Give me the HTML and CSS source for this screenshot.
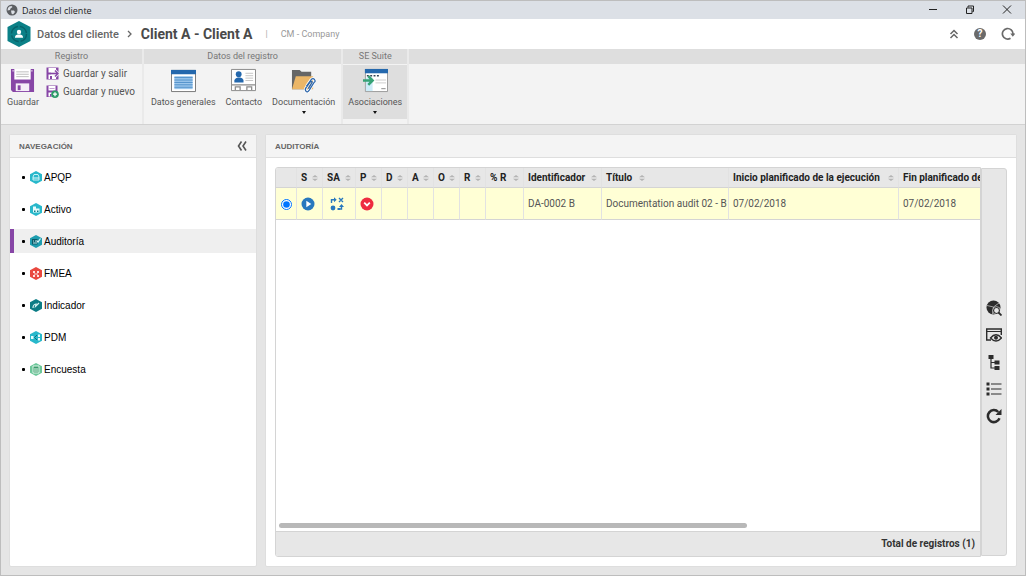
FILE: index.html
```html
<!DOCTYPE html>
<html lang="es">
<head>
<meta charset="utf-8">
<title>Datos del cliente</title>
<link rel="stylesheet" href="styles.css">
</head>
<body>
<svg class="defs" aria-hidden="true">
  <symbol id="hex" viewBox="0 0 12 13"><path d="M6 0 12 3.2V9.8L6 13 0 9.800V3.200Z"/></symbol>
  <symbol id="sort" viewBox="0 0 6 6"><path d="M0 2.300 3 0 6 2.300ZM0 3.700 3 6 6 3.700Z" fill="#b4b4b4"/></symbol>
</svg>
<div class="window">
  <div class="titlebar">
    <svg class="globe" viewBox="0 0 12 12"><circle cx="6" cy="6" r="5.500" fill="#5c5f63"/><path d="M2 4Q3 2 5.500 2L6.500 3 4.500 4.500 4 6 1.500 6.500ZM5 6.500 8 6.500 9 8 7 10.500 5.500 9.500Z" fill="#dce0e6"/></svg>
    <span class="titlebar-text">Datos del cliente</span>
    <button class="win-btn" aria-label="Minimizar"><svg viewBox="0 0 10 10"><path d="M1 4.500H9" /></svg></button>
    <button class="win-btn" aria-label="Restaurar"><svg viewBox="0 0 10 10"><path d="M1.500 3H7V8.500H1.500ZM3 2.500V1H8.500V6.500H7.500"/></svg></button>
    <button class="win-btn" aria-label="Cerrar"><svg viewBox="0 0 10 10"><path d="M1 .5 9 8.500M9 .5 1 8.500"/></svg></button>
  </div>

  <header class="header">
    <svg class="logo" viewBox="0 0 24 26"><path d="M12 0 23.500 6V20L12 26 .5 20V6Z" fill="#0b8087"/><circle cx="12" cy="13" r="7.500" fill="none" stroke="#07626a" stroke-width="1.500" stroke-dasharray="10 2"/><circle cx="12" cy="11" r="2.200" fill="#fff"/><path d="M8 16.800V15.500Q8.500 13.800 10.500 13.500H13.500Q15.500 13.800 16 15.500V16.800Z" fill="#fff"/></svg>
    <a class="crumb" href="#">Datos del cliente</a>
    <svg class="chevron" viewBox="0 0 5 8"><path d="M1 1 4 4 1 7"/></svg>
    <h1 class="title">Client A - Client A</h1>
    <span class="divider">|</span>
    <span class="company">CM - Company</span>
    <div class="header-actions">
      <button aria-label="Contraer"><svg class="ic10" viewBox="0 0 10 10"><path d="M1.500 5 5 1.500 8.500 5M1.500 9 5 5.500 8.500 9" fill="none" stroke="#666" stroke-width="1.500"/></svg></button>
      <button aria-label="Ayuda" class="help"><span>?</span></button>
      <button aria-label="Recargar"><svg class="ic14" viewBox="0 0 14 14"><path d="M9.500 11.300A5.300 5.300 0 1 1 12 7" fill="none" stroke="#6a6a6a" stroke-width="1.700"/><path d="M9.300 6.500H14.300L11.800 9.700Z" fill="#6a6a6a"/></svg></button>
    </div>
  </header>

  <div class="ribbon">
    <section class="group">
      <h2 class="group-title">Registro</h2>
      <div class="group-body registro">
        <button class="tool">
          <svg class="tool-icon" viewBox="0 0 26 26"><path d="M1 1H25V25H3L1 23Z" fill="#8746a6"/><path d="M4.500 1H21.500V12H4.500Z" fill="#fff"/><path d="M6.500 4H19.500M6.500 6.500H19.500M6.500 9H19.500" stroke="#bbb"/><path d="M6 16H20V24H6Z" fill="#f5eff8"/><path d="M8 18H11V23H8Z" fill="#8746a6"/><path d="M22 3H23.500M2.500 3H4" stroke="#fff"/></svg>
          Guardar
        </button>
        <div class="stack">
          <button class="small-tool"><svg viewBox="0 0 13 13"><path d="M.5.5H12.500V12.500H.5Z" fill="#8746a6"/><path d="M2.500 1H10V5.500H2.500ZM2.500 7.500H10V12H2.500Z" fill="#fff"/><path d="M4 9H6V12H4Z" fill="#8746a6"/><path d="M5 6.500H12M9 3.500 12 6.500 9 9.500" fill="none" stroke="#f3f3f3" stroke-width="3"/><path d="M5 6.500H12M9 3.500 12 6.500 9 9.500" fill="none" stroke="#8746a6" stroke-width="1.400"/></svg>Guardar y salir</button>
          <button class="small-tool"><svg viewBox="0 0 13 13"><path d="M.5.5H11.500V12H.5Z" fill="#8746a6"/><path d="M2.500 1H9.500V5.500H2.500ZM2.500 7.500H9V11.500H2.500Z" fill="#fff"/><path d="M4 9H5.500V11.500H4ZM3.500 3H8.500V3.600H3.500Z" fill="#8746a6"/><circle cx="9" cy="9.200" r="3.800" fill="#2c9a69"/><path d="M7 9.200H11M9 7.200V11.200" stroke="#fff" stroke-width="1.300"/></svg>Guardar y nuevo</button>
        </div>
      </div>
    </section>
    <section class="group">
      <h2 class="group-title">Datos del registro</h2>
      <div class="group-body registro-data">
        <button class="tool">
          <svg class="tool-icon" viewBox="0 0 26 26"><path d="M.5 2.500H25.500V24.500H.5Z" fill="#fff" stroke="#777"/><path d="M0 2H26V6.500H0Z" fill="#2468ad"/><path d="M3.500 8.500H22.500V22H3.500Z" fill="#9dc7ec"/><path d="M3.500 10H22.500M3.500 12.500H22.500M3.500 15H22.500M3.500 17.500H22.500M3.500 20H22.500" stroke="#4e8fc9"/></svg>
          Datos generales
        </button>
        <button class="tool">
          <svg class="tool-icon" viewBox="0 0 26 26"><path d="M.5 1.500H25.500V23.500H.5Z" fill="#fff" stroke="#888"/><circle cx="8" cy="6.500" r="3" fill="#2468ad"/><path d="M3.500 15V12.500Q5 10.500 7 10H9.500Q12 10.500 13 12.500V15Z" fill="#2468ad"/><path d="M15 5.500H23M15 8H23M15 10.500H23M15 13H23" stroke="#c4c4c4"/><path d="M1 17.500H25M4.500 23V19.500H9.500V23M16.500 23V19.500H21.500V23" fill="none" stroke="#8a8a8a" stroke-width="1.300"/></svg>
          Contacto
        </button>
        <button class="tool">
          <svg class="tool-icon" viewBox="0 0 26 26"><path d="M1 2H9L11 4H21V22H1Z" fill="#666"/><path d="M5 8.500H23V22H1Z" fill="#ebb667"/><path d="M16 19 21 12Q23 10 24.500 12T24 15L19 23Q17 26 15.500 24T16 20L20 14" fill="none" stroke="#fff" stroke-width="3"/><path d="M16 19 21 12Q23 10 24.500 12T24 15L19 23Q17 26 15.500 24T16 20L20 14.500Q22 13 22 15L18 21.500" fill="none" stroke="#2c65aa" stroke-width="1.300"/></svg>
          Documentación
          <span class="caret"></span>
        </button>
      </div>
    </section>
    <section class="group suite">
      <h2 class="group-title">SE Suite</h2>
      <div class="group-body">
        <button class="tool active">
          <svg class="tool-icon" viewBox="0 0 26 26"><path d="M2.500 1.500H25.500V24.500H2.500Z" fill="#fff" stroke="#999"/><path d="M2 1H26V5.500H2Z" fill="#2468ad"/><path d="M4 8H18" stroke="#345" stroke-width="1.500" stroke-dasharray="2 1.500"/><path d="M3 10H10V24H3Z" fill="#ccecf8"/><path d="M13 12.500H24M13 15.500H24" stroke="#ccc"/><path d="M19 21.500H23.500" stroke="#888"/><path d="M0 13H9M5.500 8.500 10 13 5.500 17.500" fill="none" stroke="#35a275" stroke-width="2.600"/></svg>
          Asociaciones
          <span class="caret"></span>
        </button>
      </div>
    </section>
    <div class="group filler"><div class="group-title"></div><div class="group-body"></div></div>
  </div>

  <main class="content">
    <aside class="panel nav-panel">
      <div class="panel-head"><h2>NAVEGACIÓN</h2><button aria-label="Contraer navegación"><svg class="ic10" viewBox="0 0 10 10"><path d="M4.500.5 1.500 5 4.500 9.500M9 .5 6 5 9 9.500" fill="none" stroke="#555" stroke-width="1.600"/></svg></button></div>
      <nav><ul class="nav-list">
        <li><a href="#"><svg viewBox="0 0 12 13"><use href="#hex" fill="#28b8cb"/><path d="M3 6 4 3.500H8L9 6V9H3Z" fill="none" stroke="#c9f2f6"/><path d="M3 7H9" stroke="#e8fbfc"/></svg>APQP</a></li>
        <li><a href="#"><svg viewBox="0 0 12 13"><use href="#hex" fill="#28b8cb"/><path d="M3 3.500H6V5.500H9.500V9.500H3Z" fill="#e8fbfc"/><path d="M4 7.500H5.500V9H4ZM7 7.500H8.500V9H7Z" fill="#0b7c88"/></svg>Activo</a></li>
        <li class="selected"><a href="#"><svg viewBox="0 0 12 13"><use href="#hex" fill="#1d9daf"/><path d="M2 4H7.500V9.500H2Z" fill="#0a5967"/><path d="M3 6H4M5 6H6M3 8H7" stroke="#bdebf0"/><path d="M6.500 5.500 8 7 10.500 3.500" fill="none" stroke="#dff8fa" stroke-width="1.200"/></svg>Auditoría</a></li>
        <li><a href="#"><svg viewBox="0 0 12 13"><use href="#hex" fill="#e9483f"/><path d="M3 4H5V6H3ZM7 4H9V6H7ZM3 8H5V10H3ZM7 8H9V10H7ZM4 6.500H8V7.500H4Z" fill="#fde0de"/></svg>FMEA</a></li>
        <li><a href="#"><svg viewBox="0 0 12 13"><use href="#hex" fill="#0b7c85"/><path d="M3 9Q3 5.500 6 5L5.500 7.500 9 4" fill="none" stroke="#d5f1f2" stroke-width="1.200"/></svg>Indicador</a></li>
        <li><a href="#"><svg viewBox="0 0 12 13"><use href="#hex" fill="#28b8cb"/><path d="M1 5H3.500V8H1ZM8 3.500H10V6H8ZM8 7H10V9.500H8Z" fill="#e8fbfc"/><path d="M7 4 4.500 6.500 7 9" fill="none" stroke="#0b6d7c"/></svg>PDM</a></li>
        <li><a href="#"><svg viewBox="0 0 12 13"><use href="#hex" fill="#6cc79a"/><path d="M3 3H9V10H3Z" fill="#3c9c6d" stroke="#e0f6ea"/><path d="M4 6H8M4 8H8" stroke="#e0f6ea"/></svg>Encuesta</a></li>
      </ul></nav>
    </aside>

    <section class="panel main-panel">
      <div class="panel-head"><h2>AUDITORÍA</h2></div>
      <div class="grid-wrap">
        <div class="grid">
          <div class="grid-scroll">
            <table>
              <colgroup><col class="c-radio"><col class="c-s"><col class="c-sa"><col class="c-s"><col class="c-s"><col class="c-s"><col class="c-s"><col class="c-s"><col class="c-pr"><col class="c-id"><col class="c-title"><col class="c-date"><col class="c-date"></colgroup>
              <thead><tr>
                <th></th>
                <th>S<svg class="sort"><use href="#sort"/></svg></th>
                <th>SA<svg class="sort"><use href="#sort"/></svg></th>
                <th>P<svg class="sort"><use href="#sort"/></svg></th>
                <th>D<svg class="sort"><use href="#sort"/></svg></th>
                <th>A<svg class="sort"><use href="#sort"/></svg></th>
                <th>O<svg class="sort"><use href="#sort"/></svg></th>
                <th>R<svg class="sort"><use href="#sort"/></svg></th>
                <th>% R<svg class="sort"><use href="#sort"/></svg></th>
                <th>Identificador<svg class="sort"><use href="#sort"/></svg></th>
                <th class="left">Título<svg class="sort"><use href="#sort"/></svg></th>
                <th>Inicio planificado de la ejecución<svg class="sort"><use href="#sort"/></svg></th>
                <th class="left">Fin planificado de la ejecución<svg class="sort"><use href="#sort"/></svg></th>
              </tr></thead>
              <tbody><tr>
                <td class="radio"><input type="radio" name="row" checked aria-label="Seleccionar DA-0002 B"></td>
                <td><svg class="ic14" viewBox="0 0 14 14"><circle cx="7" cy="7" r="6.500" fill="#2878be"/><path d="M5.300 3.800 10.300 7 5.300 10.200Z" fill="#fff"/></svg></td>
                <td class="status"><svg class="ic14" viewBox="0 0 14 14"><path d="M1.500 6V2.800H5M9 1 13 5M13 1 9 5M8.500 12H11.500V9.500" fill="none" stroke="#2878be" stroke-width="1.400"/><path d="M4 .3 6.700 2.800 4 5.300ZM9 10 11.500 7 14 10ZM7.500 11H10V13H7.500Z" fill="#2878be"/><circle cx="3" cy="11" r="2.400" fill="#2878be"/></svg></td>
                <td><svg class="ic14" viewBox="0 0 14 14"><circle cx="7" cy="7" r="6.500" fill="#ee2c40"/><path d="M4.200 5.700 7 8.400 9.800 5.700" fill="none" stroke="#fff" stroke-width="1.800"/></svg></td>
                <td></td><td></td><td></td><td></td><td></td>
                <td>DA-0002 B</td>
                <td>Documentation audit 02 - B</td>
                <td>07/02/2018</td>
                <td>07/02/2018</td>
              </tr></tbody>
            </table>
            <div class="scrollbar"><div class="thumb"></div></div>
          </div>
          <div class="grid-foot">Total de registros (1)</div>
        </div>
        <div class="side-tools">
          <button aria-label="Análisis"><svg viewBox="0 0 16 16"><circle cx="7.500" cy="7.500" r="7" fill="#2c2c2c"/><path d="M1 5.500 7.500 7 13 3M7.500 7 6.500 14" fill="none" stroke="#bbb" stroke-width=".8"/><circle cx="10.500" cy="10.500" r="3" fill="#e6e6e6" stroke="#2c2c2c" stroke-width="1.200"/><circle cx="10.500" cy="10.500" r="3.900" fill="none" stroke="#e6e6e6" stroke-width=".6"/><path d="M12.500 12.500 15.500 15.500" stroke="#2c2c2c" stroke-width="1.800"/></svg></button>
          <button aria-label="Vista previa"><svg viewBox="0 0 16 16"><path d="M5 13H.7V2H15.300V8" fill="none" stroke="#2c2c2c" stroke-width="1.400"/><path d="M1 4.500H15" stroke="#2c2c2c"/><path d="M4.500 11Q10 4.500 15.500 11Q10 17 4.500 11Z" fill="#e6e6e6" stroke="#2c2c2c" stroke-width="1.300"/><circle cx="10" cy="10.800" r="2" fill="#2c2c2c"/></svg></button>
          <button aria-label="Estructura"><svg viewBox="0 0 16 16"><path d="M2.500 1H7.500V5H2.500ZM8.500 6.500H13.500V10.500H8.500ZM8.500 12H13.500V16H8.500Z" fill="#2c2c2c"/><path d="M5 4V14H9M5 8.500H9" fill="none" stroke="#2c2c2c" stroke-width="1.200"/></svg></button>
          <button aria-label="Lista"><svg viewBox="0 0 16 16"><path d="M.5 1.500H3.500V4.500H.5ZM.5 6.500H3.500V9.500H.5ZM.5 11.500H3.500V14.500H.5Z" fill="#2c2c2c"/><path d="M5 3H15.500M5 8H15.500M5 13H15.500" stroke="#2c2c2c" stroke-width="1.200"/></svg></button>
          <button aria-label="Actualizar"><svg viewBox="0 0 16 16"><path d="M12.300 4A6 6 0 1 0 13.500 10.300" fill="none" stroke="#2c2c2c" stroke-width="2.500"/><path d="M15.500 1V7H9.500Z" fill="#2c2c2c"/></svg></button>
        </div>
      </div>
    </section>
  </main>
</div>
</body>
</html>
```

FILE: styles.css
```css
* { box-sizing: border-box; }
body { margin: 0; font-family: Roboto, "Liberation Sans", Arial, sans-serif; font-size: 10px; color: #555; }
h1, h2, ul { margin: 0; padding: 0; }
button { border: 0; padding: 0; margin: 0; background: none; font: inherit; color: inherit; }
a { color: inherit; text-decoration: none; }
svg { display: block; flex: none; }
.defs { display: none; }
.ic10 { width: 10px; height: 10px; }
.ic14 { width: 14px; height: 14px; }

.window { height: 100vh; display: flex; flex-direction: column; border: 1px solid #bdbdbd; background: #e5e5e5; overflow: hidden; }

.titlebar { flex: none; display: flex; align-items: center; height: 18px; padding-left: 5px; background: #dce0e6; color: #222; font-family: "Open Sans", "Noto Sans", sans-serif; font-size: 9px; }
.globe { width: 12px; height: 12px; margin-right: 4px; }
.titlebar-text { flex: 1; }
.win-btn { width: 37px; height: 18px; display: flex; align-items: center; justify-content: center; }
.win-btn svg { width: 10px; height: 10px; fill: none; stroke: #222; }

.header { flex: none; display: flex; align-items: center; height: 30px; padding: 0 10px 0 6px; background: #fff; }
.logo { width: 24px; height: 26px; margin-right: 6px; }
.crumb { font-size: 11px; font-weight: 500; color: #666; }
.chevron { width: 5px; height: 8px; margin: 0 9px 0 8px; fill: none; stroke: #666; stroke-width: 1.3; }
.title { font-size: 14px; line-height: 16px; font-weight: bold; color: #4a4a4a; }
.divider { margin: 0 13px; color: #aaa; font-size: 9px; }
.company { color: #999; font-size: 9px; }
.header-actions { margin-left: auto; display: flex; align-items: center; gap: 15px; }
.help { width: 12px; height: 12px; border-radius: 50%; background: #6a6a6a; color: #fff; font-size: 10px; line-height: 12px; font-weight: bold; }

.ribbon { flex: none; display: flex; gap: 2px; height: 76px; border-bottom: 1px solid #d2d2d2; background: #eaeaea; }
.group { display: flex; flex-direction: column; }
.group.filler { flex: 1; }
.group-title { height: 15px; line-height: 15px; background: #dedede; color: #777; font-size: 9px; font-weight: normal; text-align: center; }
.group-body { flex: 1; display: flex; background: #f3f3f3; }
.group-body.registro { padding: 0 7px 0 6px; gap: 7px; }
.group-body.registro-data { padding: 0 6px 0 7px; gap: 10px; }
.suite .group-body { padding: 1px 0 0; }
.tool { display: flex; flex-direction: column; align-items: center; height: 54px; padding-top: 4px; font-size: 9px; line-height: 12px; gap: 3px; white-space: nowrap; }
.tool.active { padding: 3px 5px 0; background: #dedede; }
.tool-icon { width: 25px; height: 25px; }
.caret { border: 2px solid transparent; border-top: 3px solid #111; border-bottom: 0; }
.stack { display: flex; flex-direction: column; gap: 4px; padding-top: 2px; }
.small-tool { display: flex; align-items: center; gap: 4px; height: 14px; font-size: 10px; white-space: nowrap; }
.small-tool svg { width: 13px; height: 13px; }

.content { flex: 1; min-height: 0; display: flex; gap: 8px; padding: 9px 8px 8px; }
.panel { display: flex; flex-direction: column; background: #fff; border: 1px solid #dedede; border-radius: 2px; }
.nav-panel { flex: none; width: 248px; font-family: "Liberation Sans", Arial, sans-serif; }
.main-panel { flex: 1; min-width: 0; }
.panel-head { flex: none; display: flex; align-items: center; justify-content: space-between; height: 23px; padding: 0 9px; background: #f4f4f4; border-bottom: 1px solid #dedede; }
.panel-head h2 { font-family: "Liberation Sans", Arial, sans-serif; font-size: 8px; font-weight: bold; color: #666; }

.nav-list { list-style: none; display: flex; flex-direction: column; gap: 8px; padding-top: 7px; color: #000; }
.nav-list a { display: flex; align-items: center; gap: 2px; height: 24px; padding-left: 8px; border-left: 4px solid transparent; }
.nav-list a::before { content: ""; width: 3px; height: 3px; margin-right: 3px; border-radius: 1px; background: #000; }
.nav-list svg { width: 12px; height: 13px; }
.nav-list .selected a { background: #efefef; border-left-color: #8746a6; }

.grid-wrap { flex: 1; min-height: 0; display: flex; padding: 9px; }
.grid { flex: 1; min-width: 0; display: flex; flex-direction: column; border: 1px solid #d4d4d4; border-radius: 3px 0 0 3px; overflow: hidden; }
.grid-scroll { flex: 1; min-height: 0; display: flex; flex-direction: column; justify-content: space-between; overflow: hidden; }
table { width: 793px; table-layout: fixed; border-collapse: separate; border-spacing: 0; }
.c-radio { width: 21px; }
.c-s { width: 26px; }
.c-sa { width: 33px; }
.c-pr { width: 38px; }
.c-id { width: 78px; }
.c-title { width: 127px; }
.c-date { width: 170px; }
th, td { padding: 0 4px; border-right: 1px solid #e2e2e2; border-bottom: 1px solid #d4d4d4; white-space: nowrap; text-align: left; overflow: hidden; }
th { height: 20px; background: #e7e7e7; color: #222; font-weight: bold; }
th .sort { float: right; width: 6px; height: 6px; margin-top: 3px; }
th.left .sort { float: none; display: inline-block; margin: 0 0 0 7px; }
td { height: 32px; background: #ffffd5; color: #555; }
td.radio { padding: 0; }
td.status { padding-left: 7px; }
td.radio input { display: block; width: 11px; height: 11px; margin: 2px auto 0; accent-color: #0075ff; }
.scrollbar { padding: 0 3px 3px; }
.thumb { width: 67%; height: 5px; border-radius: 3px; background: #b8b8b8; }
.grid-foot { flex: none; height: 25px; padding: 0 5px; border-top: 1px solid #d4d4d4; background: #e7e7e7; color: #333; font-weight: bold; line-height: 24px; text-align: right; }
.side-tools { flex: none; width: 26px; display: flex; flex-direction: column; align-items: center; justify-content: center; gap: 11px; margin: 1px 0; border: 1px solid #d4d4d4; border-radius: 0 3px 3px 0; background: #e7e7e7; }
.side-tools svg { width: 16px; height: 16px; }
```
